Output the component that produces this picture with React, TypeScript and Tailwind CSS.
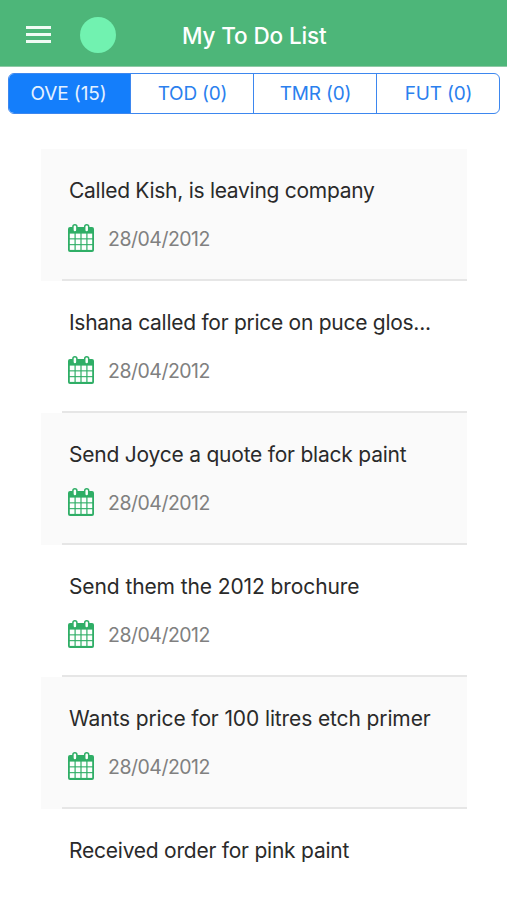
type Task = {
  title: string;
  date?: string;
  tracking: string;
};

const tabs = ["OVE (15)", "TOD (0)", "TMR (0)", "FUT (0)"];

// the last row is peeking in from below, so its date is still off screen
const tasks: Task[] = [
  { title: "Called Kish, is leaving company", date: "28/04/2012", tracking: "tracking-[-0.28px]" },
  { title: "Ishana called for price on puce glos...", date: "28/04/2012", tracking: "tracking-[-0.27px]" },
  { title: "Send Joyce a quote for black paint", date: "28/04/2012", tracking: "tracking-[-0.22px]" },
  { title: "Send them the 2012 brochure", date: "28/04/2012", tracking: "tracking-[-0.1px]" },
  { title: "Wants price for 100 litres etch primer", date: "28/04/2012", tracking: "tracking-[-0.12px]" },
  { title: "Received order for pink paint", tracking: "tracking-[-0.23px]" },
];

const CalendarIcon = () => (
  <svg width="26" height="29" viewBox="0 0 26 29" className="shrink-0">
    <rect x="0" y="3" width="26" height="25" rx="2" fill="#2fae66" />
    {/* day cells */}
    <g fill="#fcfffd">
      {[9.6, 15.4, 21.2].map((y) =>
        [1.8, 7.7, 13.6, 19.5].map((x) => (
          <rect key={`${x}-${y}`} x={x} y={y} width="4.7" height="4.7" />
        ))
      )}
    </g>
    {/* rings */}
    <g fill="#fcfffd" stroke="#2fae66" strokeWidth="1.5">
      <rect x="4.9" y="0.8" width="4" height="7.2" rx="2" />
      <rect x="16.7" y="0.8" width="4" height="7.2" rx="2" />
    </g>
  </svg>
);

const Header = () => (
  <header className="grid h-[67px] grid-cols-[182px_1fr] items-center border-b border-[#8fc9a6] bg-[#4db679] pt-1">
    <div className="flex items-center pl-[26px]">
      {/* menu */}
      <button className="flex w-[25px] flex-col gap-1 pb-0.5" aria-label="Menu">
        <span className="h-[3px] bg-[#f0fbf4]" />
        <span className="h-[3px] bg-[#f0fbf4]" />
        <span className="h-[3px] bg-[#f0fbf4]" />
      </button>
      <div className="ml-[29px] size-[36px] rounded-full bg-[#71f2b0]" />
    </div>
    <h1 className="pt-0.5 text-[22.5px] font-medium tracking-[-0.12px] whitespace-nowrap text-white">
      My To Do List
    </h1>
  </header>
);

const Tabs = () => (
  <nav className="mr-[7px] ml-[8px] mt-[6px] grid h-[41px] grid-cols-[121px_123px_123px_1fr] overflow-hidden rounded-[6px] border-[1.5px] border-[#3d87ef]">
    {tabs.map((tab, i) => (
      <button
        key={tab}
        className={
          i === 0
            ? "bg-[#147efb] pt-0.5 pr-0.5 text-[19px] tracking-[-0.1px] text-[#e4f1ff]"
            : "border-l border-[#3d87ef] pt-0.5 pl-px text-[19px] tracking-[-0.2px] text-[#2b80ee]"
        }
      >
        {tab}
      </button>
    ))}
  </nav>
);

const TaskRow = ({ task, shaded }: { task: Task; shaded: boolean }) => (
  <li className={shaded ? "h-[132px] bg-[#fafafa] pl-[21px]" : "h-[132px] pl-[21px]"}>
    <div className="h-full border-b-2 border-[#e6e6e6] pt-[26px] pl-[7px]">
      <div className={`text-[21px] leading-[32px] whitespace-nowrap text-[#2a2a2a] ${task.tracking}`}>
        {task.title}
      </div>
      {task.date && (
        <div className="-ml-px mt-[16px] flex items-center gap-[14px]">
          <CalendarIcon />
          <span className="pt-0.5 text-[19.5px] leading-[29px] tracking-[-0.5px] text-[#808080]">
            {task.date}
          </span>
        </div>
      )}
    </div>
  </li>
);

export default function App() {
  return (
    <div className="h-[900px] w-[507px] overflow-hidden bg-white font-['Inter',sans-serif]">
      <Header />
      <Tabs />
      <ul className="mt-[35px] mr-[40px] ml-[41px]">
        {tasks.map((task, i) => (
          <TaskRow key={task.title} task={task} shaded={i % 2 === 0} />
        ))}
      </ul>
    </div>
  );
}
